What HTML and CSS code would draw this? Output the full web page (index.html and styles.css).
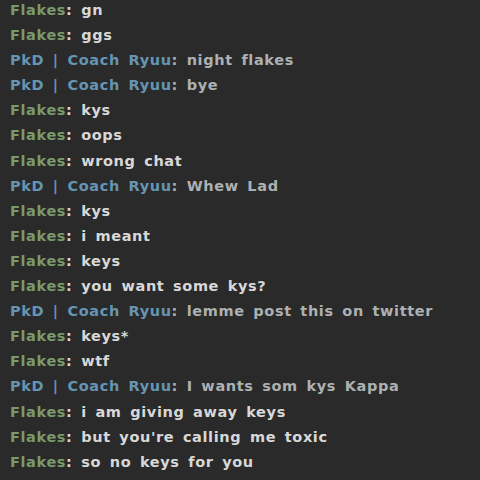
FILE: index.html
```html
<!DOCTYPE html>
<html>
<head>
<meta charset="utf-8">
<link rel="stylesheet" href="styles.css">
</head>
<body>
<div class="chat">
  <div class="line flakes"><span class="name">Flakes</span><span class="msg">: gn</span></div>
  <div class="line flakes"><span class="name">Flakes</span><span class="msg">: ggs</span></div>
  <div class="line coach"><span class="name">PkD | Coach Ryuu</span><span class="msg">: night flakes</span></div>
  <div class="line coach"><span class="name">PkD | Coach Ryuu</span><span class="msg">: bye</span></div>
  <div class="line flakes"><span class="name">Flakes</span><span class="msg">: kys</span></div>
  <div class="line flakes"><span class="name">Flakes</span><span class="msg">: oops</span></div>
  <div class="line flakes"><span class="name">Flakes</span><span class="msg">: wrong chat</span></div>
  <div class="line coach"><span class="name">PkD | Coach Ryuu</span><span class="msg">: Whew Lad</span></div>
  <div class="line flakes"><span class="name">Flakes</span><span class="msg">: kys</span></div>
  <div class="line flakes"><span class="name">Flakes</span><span class="msg">: i meant</span></div>
  <div class="line flakes"><span class="name">Flakes</span><span class="msg">: keys</span></div>
  <div class="line flakes"><span class="name">Flakes</span><span class="msg">: you want some kys?</span></div>
  <div class="line coach"><span class="name">PkD | Coach Ryuu</span><span class="msg">: lemme post this on twitter</span></div>
  <div class="line flakes"><span class="name">Flakes</span><span class="msg">: keys*</span></div>
  <div class="line flakes"><span class="name">Flakes</span><span class="msg">: wtf</span></div>
  <div class="line coach"><span class="name">PkD | Coach Ryuu</span><span class="msg">: I wants som kys Kappa</span></div>
  <div class="line flakes"><span class="name">Flakes</span><span class="msg">: i am giving away keys</span></div>
  <div class="line flakes"><span class="name">Flakes</span><span class="msg">: but you're calling me toxic</span></div>
  <div class="line flakes"><span class="name">Flakes</span><span class="msg">: so no keys for you</span></div>
</div>
</body>
</html>
```
FILE: styles.css
```css
html, body {
  margin: 0;
  padding: 0;
  background: #2a2a2a;
  height: 100%;
  overflow: hidden;
}
.chat {
  display: flex;
  flex-direction: column;
  margin-top: -2px;
  padding-left: 10px;
  font-family: "DejaVu Sans", Verdana, sans-serif;
  font-weight: bold;
  font-size: 14.5px;
  letter-spacing: 0.62px;
  word-spacing: 3px;
  line-height: 25.1px;
  white-space: nowrap;
}
.line {
  height: 25.1px;
}
.flakes .name { color: #7a9a6b; }
.flakes .msg { color: #d8d8d8; }
.coach .name { color: #6595b2; }
.coach .msg { color: #adb1b2; }
```
